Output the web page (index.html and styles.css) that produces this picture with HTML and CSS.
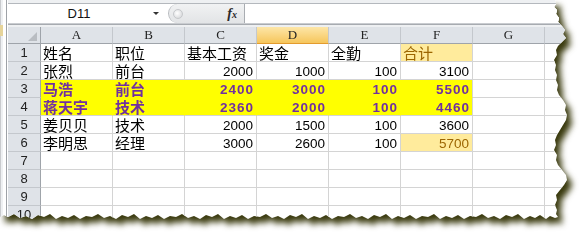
FILE: index.html
```html
<!DOCTYPE html>
<html lang="zh">
<head>
<meta charset="utf-8">
<title>Sheet</title>
<link rel="stylesheet" href="styles.css">
</head>
<body>
<div class="shadow">
  <div class="paper">
    <div class="strip"><div class="strip-mark"></div></div>
    <div class="main">
      <div class="fbar">
        <div class="frow">
          <div class="namebox">D11</div>
          <div class="drop"><span class="tri"></span></div>
          <div class="fgap"></div>
          <div class="fxpanel"><span class="knob"></span><span class="fx">f<small>x</small></span></div>
          <div class="finput"></div>
        </div>
      </div>
      <div class="grid">
        <div class="corner"><svg width="33" height="16" viewBox="0 0 33 16"><polygon points="20,14 29,14 29,5" fill="#b9bdc2"/></svg></div>
        <div class="ch">A</div><div class="ch">B</div><div class="ch">C</div><div class="ch sel">D</div><div class="ch">E</div><div class="ch">F</div><div class="ch">G</div><div class="ch"></div>

        <div class="rh">1</div>
        <div class="c">姓名</div><div class="c">职位</div><div class="c">基本工资</div><div class="c">奖金</div><div class="c">全勤</div><div class="c neu">合计</div><div class="c"></div><div class="c"></div>

        <div class="rh">2</div>
        <div class="c">张烈</div><div class="c">前台</div><div class="c n">2000</div><div class="c n">1000</div><div class="c n">100</div><div class="c n">3100</div><div class="c"></div><div class="c"></div>

        <div class="rh">3</div>
        <div class="c hl t">马浩</div><div class="c hl t">前台</div><div class="c n hl t">2400</div><div class="c n hl t">3000</div><div class="c n hl t">100</div><div class="c n hl t last">5500</div><div class="c"></div><div class="c"></div>

        <div class="rh">4</div>
        <div class="c hl">蒋天宇</div><div class="c hl">技术</div><div class="c n hl">2360</div><div class="c n hl">2000</div><div class="c n hl">100</div><div class="c n hl last">4460</div><div class="c"></div><div class="c"></div>

        <div class="rh">5</div>
        <div class="c">姜贝贝</div><div class="c">技术</div><div class="c n">2000</div><div class="c n">1500</div><div class="c n">100</div><div class="c n">3600</div><div class="c"></div><div class="c"></div>

        <div class="rh">6</div>
        <div class="c">李明思</div><div class="c">经理</div><div class="c n">3000</div><div class="c n">2600</div><div class="c n">100</div><div class="c n neu">5700</div><div class="c"></div><div class="c"></div>

        <div class="rh">7</div>
        <div class="c"></div><div class="c"></div><div class="c"></div><div class="c"></div><div class="c"></div><div class="c"></div><div class="c"></div><div class="c"></div>

        <div class="rh">8</div>
        <div class="c"></div><div class="c"></div><div class="c"></div><div class="c"></div><div class="c"></div><div class="c"></div><div class="c"></div><div class="c"></div>

        <div class="rh">9</div>
        <div class="c"></div><div class="c"></div><div class="c"></div><div class="c"></div><div class="c"></div><div class="c"></div><div class="c"></div><div class="c"></div>

        <div class="rh">10</div>
        <div class="c"></div><div class="c"></div><div class="c"></div><div class="c"></div><div class="c"></div><div class="c"></div><div class="c"></div><div class="c"></div>
      </div>
    </div>
  </div>
</div>
</body>
</html>
```
FILE: styles.css
```css
html, body {
  margin: 0;
  padding: 0;
  background: #ffffff;
}
body {
  width: 581px;
  height: 235px;
  overflow: hidden;
  font-family: "Noto Sans CJK SC", "Liberation Sans", sans-serif;
}
.shadow {
  width: 581px;
  height: 235px;
  filter: drop-shadow(5px 6px 3px rgba(46, 46, 0, 0.95));
}
.paper {
  display: flex;
  width: 581px;
  height: 235px;
  background: #ffffff;
  clip-path: polygon(0 0, 555px 0, 556px 4px, 554px 7px, 557px 10px, 556px 14px, 559px 18px, 558px 22px, 562px 26px, 565px 30px, 563px 34px, 566px 38px, 562px 42px, 558px 46px, 556px 50px, 557px 55px, 554px 60px, 556px 65px, 555px 70px, 557px 75px, 556px 80px, 558px 85px, 557px 90px, 559px 95px, 563px 100px, 566px 105px, 565px 110px, 567px 115px, 566px 120px, 563px 125px, 560px 130px, 557px 135px, 555px 140px, 556px 145px, 554px 150px, 557px 155px, 556px 160px, 558px 165px, 562px 170px, 566px 175px, 567px 180px, 564px 185px, 560px 190px, 556px 195px, 557px 200px, 555px 205px, 557px 210px, 556px 214px, 558px 217px, 555px 218px, 550px 216px, 546px 219px, 540px 215px, 535px 218px, 530px 216px, 524px 219px, 518px 214px, 512px 217px, 506px 215px, 500px 219px, 494px 216px, 488px 218px, 482px 214px, 476px 217px, 470px 216px, 464px 219px, 458px 215px, 452px 218px, 446px 216px, 440px 219px, 434px 214px, 428px 217px, 422px 216px, 416px 219px, 410px 215px, 404px 218px, 398px 216px, 392px 219px, 386px 214px, 380px 217px, 374px 215px, 368px 219px, 362px 216px, 356px 218px, 350px 214px, 344px 217px, 338px 216px, 332px 219px, 326px 215px, 320px 218px, 314px 216px, 308px 219px, 302px 214px, 296px 217px, 290px 215px, 284px 219px, 278px 216px, 272px 218px, 266px 214px, 260px 217px, 254px 216px, 248px 219px, 242px 215px, 236px 218px, 230px 216px, 224px 219px, 218px 214px, 212px 217px, 206px 215px, 200px 219px, 194px 216px, 188px 218px, 182px 214px, 176px 217px, 170px 216px, 164px 219px, 158px 215px, 152px 218px, 146px 216px, 140px 219px, 134px 214px, 128px 217px, 122px 215px, 116px 219px, 110px 216px, 104px 218px, 98px 214px, 92px 217px, 86px 216px, 80px 219px, 74px 215px, 68px 218px, 62px 216px, 56px 219px, 50px 214px, 44px 217px, 38px 215px, 32px 219px, 26px 216px, 20px 218px, 14px 214px, 8px 217px, 4px 215px, 0 217px);
}

/* left window edge */
.strip {
  width: 8px;
  flex: none;
  background: linear-gradient(to right, #c9cbce 0, #c9cbce 1px, #eef0f2 1px, #eef0f2 3px, #ffffff 3px, #ffffff 6px, #9ea2a7 6px, #9ea2a7 7px, #ffffff 7px);
}
.strip-mark {
  width: 3px;
  height: 11px;
  margin-top: 25px;
  background: #e6d49a;
}

.main {
  flex: 1;
  min-width: 0;
  display: flex;
  flex-direction: column;
}

/* formula bar */
.fbar {
  height: 27px;
  box-sizing: border-box;
  padding-top: 3px;
  background: #eef0f2;
}
.frow {
  display: flex;
  height: 21px;
  box-sizing: border-box;
  border-top: 1px solid #b4b8bd;
  border-bottom: 1px solid #c9ccd0;
  box-shadow: 0 1px 0 #a7abb0;
  background: #ffffff;
}
.namebox {
  width: 142px;
  flex: none;
  text-align: center;
  font: 13px/19px "Liberation Sans", sans-serif;
  color: #111;
}
.drop {
  width: 15px;
  flex: none;
  display: flex;
  align-items: center;
  justify-content: center;
}
.tri {
  width: 0;
  height: 0;
  border-left: 3px solid transparent;
  border-right: 3px solid transparent;
  border-top: 3px solid #333;
  margin-right: 4px;
}
.fgap {
  width: 3px;
  flex: none;
}
.fxpanel {
  width: 77px;
  flex: none;
  box-sizing: border-box;
  display: flex;
  align-items: center;
  justify-content: space-between;
  padding: 0 7px 0 4px;
  background: linear-gradient(#f1f2f3, #e2e4e6);
  border-radius: 10px 0 0 10px;
  border-left: 1px solid #b9bcc0;
  border-right: 1px solid #a9adb2;
}
.knob {
  width: 8px;
  height: 8px;
  border-radius: 50%;
  background: radial-gradient(circle at 40% 40%, #ffffff, #cfd1d4);
  border: 1px solid #c6c8cb;
}
.fx {
  font: italic bold 14px/19px "Liberation Serif", serif;
  color: #2a2a2a;
}
.fx small {
  font-size: 10px;
}
.finput {
  flex: 1;
  background: #ffffff;
}

/* grid */
.grid {
  display: grid;
  grid-template-columns: 33px repeat(7, 72px) 1fr;
  grid-template-rows: 17px repeat(10, 18px);
}
.corner,
.ch,
.rh {
  background: #dfe3e8;
  box-sizing: border-box;
}
.corner {
  border-right: 1px solid #9fa4aa;
  border-bottom: 1px solid #9fa4aa;
}
.corner svg {
  display: block;
}
.ch {
  border-right: 1px solid #c4c8cd;
  border-bottom: 1px solid #9fa4aa;
  text-align: center;
  font: 13px/16px "Liberation Serif", serif;
  color: #222;
}
.ch.sel {
  background: linear-gradient(#fde6a8, #f6c65c);
  border-bottom-color: #e39b2e;
}
.rh {
  border-right: 1px solid #9fa4aa;
  border-bottom: 1px solid #c4c8cd;
  text-align: center;
  font: 13px/17px "Liberation Sans", sans-serif;
  color: #222;
}
.c {
  box-sizing: border-box;
  border-right: 1px solid #d4d4d4;
  border-bottom: 1px solid #d4d4d4;
  padding: 0 2px;
  font-size: 15px;
  line-height: 17px;
  white-space: nowrap;
  color: #000;
}
.n {
  text-align: right;
  font-family: "Liberation Sans", sans-serif;
  font-size: 13.5px;
  padding-top: 1px;
  padding-right: 3px;
}
.hl {
  background: #ffff00;
  color: #7030a0;
  font-weight: bold;
  border-right-color: #ffff00;
}
.hl.t {
  border-bottom-color: #ffff00;
}
.hl.last {
  border-right-color: #d4d4d4;
}
.hl.n {
  letter-spacing: 1px;
  padding-right: 2px;
}
.neu {
  background: #ffeb9c;
  color: #9c6500;
}
```
